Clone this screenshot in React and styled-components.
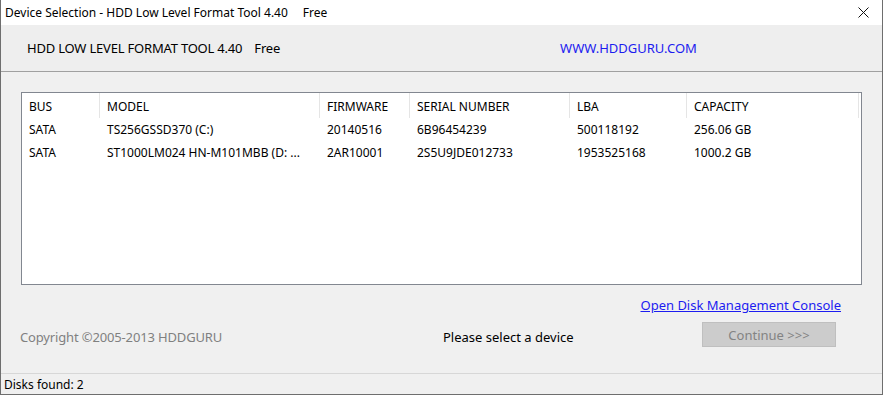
import styled, { createGlobalStyle } from 'styled-components';

const GlobalStyle = createGlobalStyle`
  html, body {
    margin: 0;
    padding: 0;
    background: #ffffff;
  }
  * {
    box-sizing: border-box;
  }
`;

const columns = [
  { key: 'bus', title: 'BUS', width: 78 },
  { key: 'model', title: 'MODEL', width: 220 },
  { key: 'firmware', title: 'FIRMWARE', width: 90 },
  { key: 'serial', title: 'SERIAL NUMBER', width: 160 },
  { key: 'lba', title: 'LBA', width: 117 },
  { key: 'capacity', title: 'CAPACITY', width: 172 },
];

const disks = [
  {
    bus: 'SATA',
    model: 'TS256GSSD370 (C:)',
    firmware: '20140516',
    serial: '6B96454239',
    lba: '500118192',
    capacity: '256.06 GB',
  },
  {
    bus: 'SATA',
    model: 'ST1000LM024 HN-M101MBB (D: ...',
    firmware: '2AR10001',
    serial: '2S5U9JDE012733',
    lba: '1953525168',
    capacity: '1000.2 GB',
  },
];

const gridTemplate = columns.map((c) => `${c.width}px`).join(' ') + ' 1fr';

function CloseIcon() {
  return (
    <svg width="11" height="11" viewBox="0 0 11 11">
      <path d="M0.5 0.5 L10.5 10.5 M10.5 0.5 L0.5 10.5" stroke="#111" strokeWidth="1" />
    </svg>
  );
}

function App() {
  return (
    <>
      <GlobalStyle />
      <Window>
        <TitleBar>
          <TitleText>Device Selection - HDD Low Level Format Tool 4.40</TitleText>
          <TitleText>Free</TitleText>
          <CloseButton>
            <CloseIcon />
          </CloseButton>
        </TitleBar>

        <Header>
          <ProductName>HDD LOW LEVEL FORMAT TOOL 4.40</ProductName>
          <ProductName>Free</ProductName>
          <SiteLink>WWW.HDDGURU.COM</SiteLink>
        </Header>

        <Body>
          <ListBox>
            <Row $header>
              {columns.map((c) => (
                <HeadCell key={c.key}>{c.title}</HeadCell>
              ))}
              <HeadCell $last />
            </Row>
            {disks.map((disk, index) => (
              <Row key={index}>
                {columns.map((c) => (
                  <Cell key={c.key}>{disk[c.key]}</Cell>
                ))}
                <Cell />
              </Row>
            ))}
          </ListBox>

          <LinkRow>
            <ConsoleLink>Open Disk Management Console</ConsoleLink>
          </LinkRow>

          <FooterRow>
            <Copyright>Copyright ©2005-2013 HDDGURU</Copyright>
            <Message>Please select a device</Message>
            <ContinueButton disabled>Continue &gt;&gt;&gt;</ContinueButton>
          </FooterRow>
        </Body>

        <StatusBar>
          <StatusText>Disks found: 2</StatusText>
        </StatusBar>
      </Window>
    </>
  );
}

const Window = styled.div`
  width: 883px;
  height: 395px;
  display: flex;
  flex-direction: column;
  background: #f0f0f0;
  border-left: 1px solid #6e6e6e;
  border-right: 1px solid #6e6e6e;
  border-bottom: 1px solid #6e6e6e;
  font-family: 'Noto Sans', 'Open Sans', sans-serif;
  font-size: 12px;
  color: #000;
`;

const TitleBar = styled.div`
  height: 25px;
  flex-shrink: 0;
  display: flex;
  align-items: center;
  padding-left: 4px;
  background: #ffffff;
`;

const TitleText = styled.span`
  font-size: 12px;
  margin-right: 15px;
  white-space: nowrap;
`;

const CloseButton = styled.div`
  margin-left: auto;
  width: 46px;
  height: 25px;
  display: flex;
  align-items: center;
  justify-content: center;
  margin-right: -4px;
`;

const Header = styled.div`
  height: 47px;
  flex-shrink: 0;
  display: flex;
  align-items: center;
  padding-left: 26px;
  background: #eeeeee;
  border-bottom: 1px solid #a0a0a0;
`;

const ProductName = styled.span`
  font-size: 13px;
  letter-spacing: -0.2px;
  margin-right: 12px;
  white-space: nowrap;
`;

const SiteLink = styled.span`
  font-size: 13px;
  color: #1c1cf0;
  margin-left: 268px;
`;

const Body = styled.div`
  flex: 1;
  display: flex;
  flex-direction: column;
  padding: 20px 20px 0 20px;
`;

const ListBox = styled.div`
  width: 841px;
  height: 193px;
  background: #ffffff;
  border: 1px solid #828790;
`;

const Row = styled.div`
  display: grid;
  grid-template-columns: ${gridTemplate};
  height: ${(p) => (p.$header ? 25 : 23)}px;
  align-items: center;
`;

const HeadCell = styled.div`
  height: 100%;
  display: flex;
  align-items: center;
  padding-left: 7px;
  padding-top: 1px;
  border-right: ${(p) => (p.$last ? 'none' : '1px solid #e5e5e5')};
  white-space: nowrap;
  overflow: hidden;
`;

const Cell = styled.div`
  padding-left: 7px;
  white-space: nowrap;
  overflow: hidden;
`;

const LinkRow = styled.div`
  display: flex;
  justify-content: flex-end;
  padding-right: 21px;
  margin-top: 11px;
`;

const ConsoleLink = styled.span`
  color: #1c1cf0;
  text-decoration: underline;
  font-size: 13px;
`;

const FooterRow = styled.div`
  display: flex;
  align-items: flex-start;
  margin-top: 8px;
`;

const Copyright = styled.span`
  color: #808080;
  font-size: 13px;
  letter-spacing: -0.15px;
  line-height: 18px;
  padding-top: 6px;
  margin-left: -1px;
  width: 423px;
`;

const Message = styled.span`
  font-size: 13px;
  line-height: 18px;
  padding-top: 6px;
  width: 259px;
`;

const ContinueButton = styled.button`
  width: 134px;
  height: 25px;
  background: #cccccc;
  border: 1px solid #bfbfbf;
  color: #838383;
  font-family: inherit;
  font-size: 13px;
  padding: 0;
`;

const StatusBar = styled.div`
  margin-top: auto;
  height: 21px;
  display: flex;
  align-items: center;
  padding-left: 3px;
  border-top: 1px solid #d7d7d7;
`;

const StatusText = styled.span`
  font-size: 12px;
`;

export default App;
